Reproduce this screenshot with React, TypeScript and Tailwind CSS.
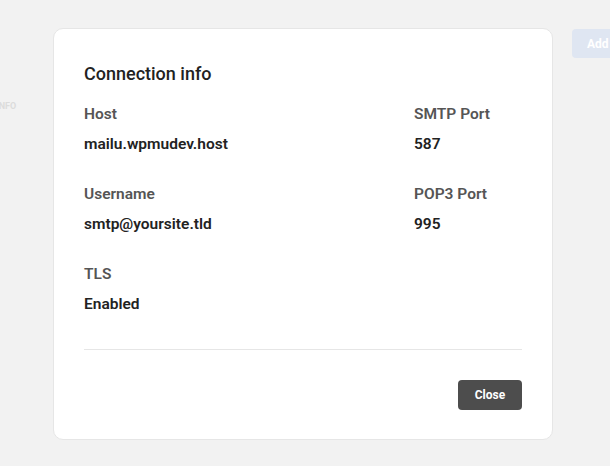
const fields = [
  { label: 'Host', value: 'mailu.wpmudev.host' },
  { label: 'SMTP Port', value: '587' },
  { label: 'Username', value: 'smtp@yoursite.tld' },
  { label: 'POP3 Port', value: '995' },
  { label: 'TLS', value: 'Enabled' },
]

export default function App() {
  return (
    <div
      className="relative h-[466px] w-[610px] overflow-hidden bg-[#f2f2f2]"
      style={{ fontFamily: 'Roboto, "Noto Sans", sans-serif' }}
    >
      {/* page behind the dialog */}
      <div className="flex items-start justify-between">
        <span className="ml-[-4px] mt-[100px] text-[9px] font-bold uppercase text-[#dcdcdc]">Info</span>
        <button
          type="button"
          className="mr-[-40px] mt-[29px] h-[29px] w-[78px] rounded bg-[#dfe6f2] pl-[15px] text-left text-[12px] font-bold text-white"
        >
          Add
        </button>
      </div>

      {/* dialog */}
      <div className="absolute left-[53px] top-[28px] flex h-[412px] w-[500px] flex-col rounded-[10px] border border-[#e6e6e6] bg-white px-[30px] pb-[29px] pt-[33px]">
        <h2 className="text-[18px] font-medium leading-[24px] text-[#222]">Connection info</h2>
        <dl className="mt-[18px] grid grid-cols-[330px_1fr] gap-y-[30px]">
          {fields.map((field) => (
            <div key={field.label}>
              <dt className="text-[15.5px] font-semibold leading-[20px] text-[#555]">{field.label}</dt>
              <dd className="mt-[10px] text-[15.5px] font-semibold leading-[20px] text-[#222]">{field.value}</dd>
            </div>
          ))}
        </dl>
        <div className="mt-auto border-t border-[#e6e6e6] pt-[30px]">
          <div className="flex justify-end">
            <button
              type="button"
              className="h-[30px] w-[64px] rounded-[4px] bg-[#4d4d4d] text-[12px] font-bold text-white"
            >
              Close
            </button>
          </div>
        </div>
      </div>
    </div>
  )
}
